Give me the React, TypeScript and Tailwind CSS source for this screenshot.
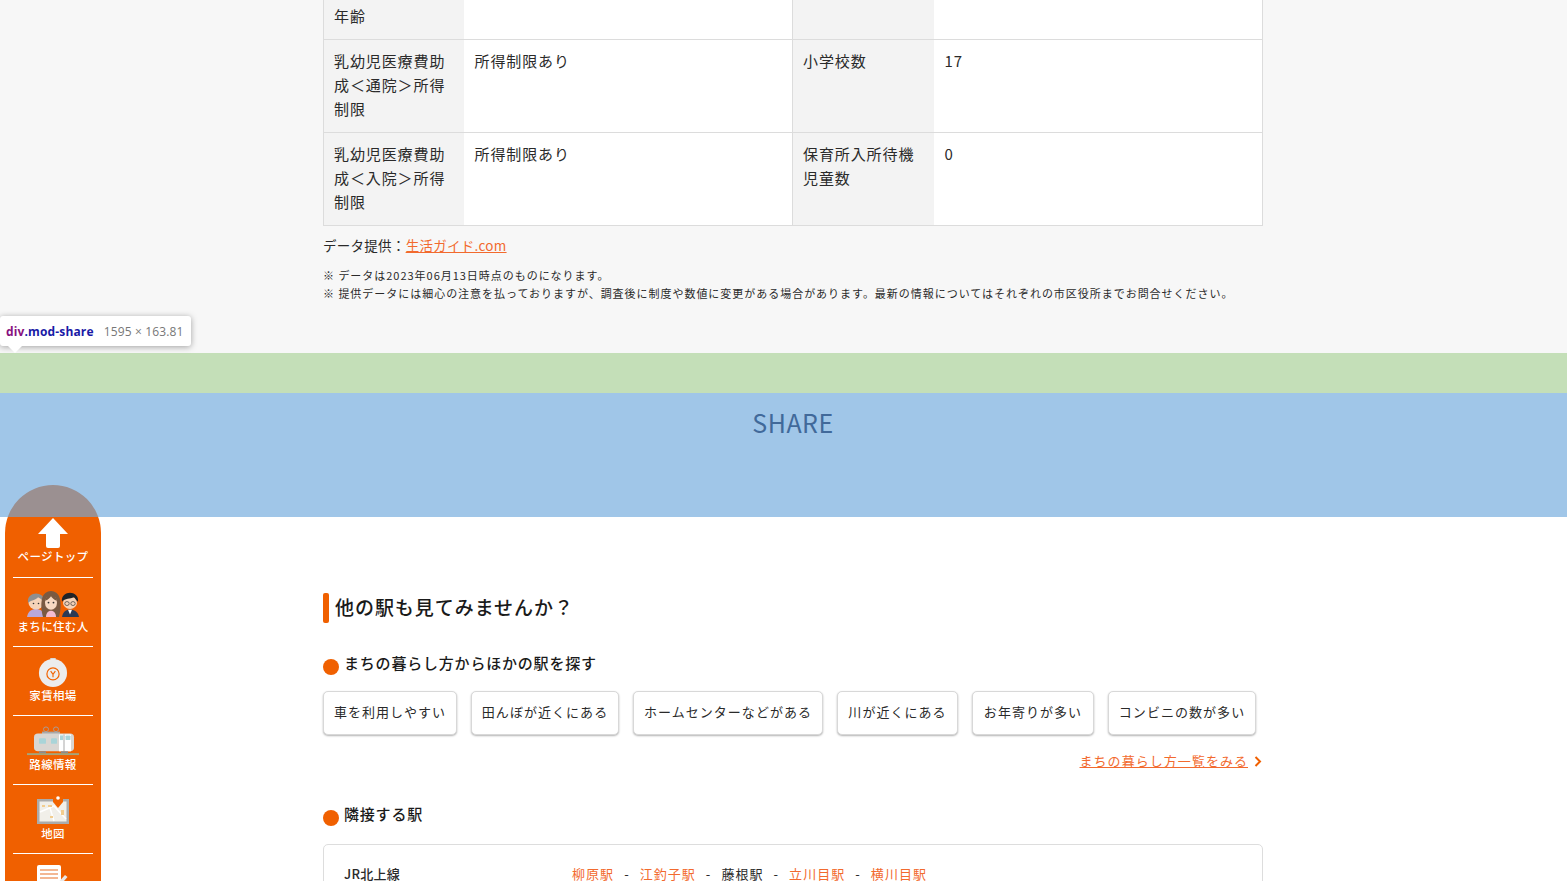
const font = { fontFamily: '"Noto Sans CJK JP", "Noto Sans", sans-serif' };

const themes = [
  { label: "車を利用しやすい", w: "w-[134px]" },
  { label: "田んぼが近くにある", w: "w-[148px]" },
  { label: "ホームセンターなどがある", w: "w-[190px]" },
  { label: "川が近くにある", w: "w-[121px]" },
  { label: "お年寄りが多い", w: "w-[122px]" },
  { label: "コンビニの数が多い", w: "w-[148px]" },
];

function PeopleIcon() {
  return (
    <svg width="54" height="28" viewBox="0 0 54 31" preserveAspectRatio="none">
      <path d="M1 30c1-7 5-9 9-9s8 2 9 9z" fill="#b9a8d8" />
      <circle cx="10" cy="14" r="7.5" fill="#f6d3b8" />
      <path d="M2 14c-1-7 4-10 8-10s9 3 8 9c-3-3-4-4-6-5-2 3-6 3-10 6z" fill="#8f8f8f" />
      <path d="M36 30c1-6 4-8 8-8s8 2 9 8z" fill="#2b3a55" />
      <path d="M42 22h4l-2 5z" fill="#fff" />
      <circle cx="44" cy="14" r="7" fill="#f6d3b8" />
      <path d="M36 13c-1-7 4-10 8-10s9 3 8 10c-2-2-3-4-4-5-4 2-9 1-12 5z" fill="#1f2328" />
      <circle cx="41" cy="15" r="2.2" fill="none" stroke="#333" strokeWidth=".7" />
      <circle cx="47" cy="15" r="2.2" fill="none" stroke="#333" strokeWidth=".7" />
      <path d="M17 30c-2-9-2-15-1-20 1-6 5-9 9-9s8 3 9 9c1 5 1 11-1 20z" fill="#7a5a42" />
      <path d="M20 30c0-4 2-7 5-7s5 3 5 7z" fill="#f3bcd0" />
      <ellipse cx="25" cy="14" rx="6" ry="8" fill="#f8d9c2" />
      <path d="M19 12c1-5 4-8 6-8s5 3 6 8c-3-1-5-3-6-5-1 2-3 4-6 5z" fill="#7a5a42" />
      <circle cx="22.5" cy="14" r=".9" fill="#333" />
      <circle cx="27.5" cy="14" r=".9" fill="#333" />
      <circle cx="7.500" cy="15" r=".8" fill="#333" />
      <circle cx="12.500" cy="15" r=".8" fill="#333" />
    </svg>
  );
}

function PouchIcon() {
  return (
    <svg width="32" height="30" viewBox="0 0 32 32">
      <path d="M13 1h6l-1 5h-4z" fill="#d8d8d8" />
      <circle cx="16" cy="17" r="15" fill="#ececec" />
      <circle cx="16" cy="18" r="6.500" fill="none" stroke="#f26300" strokeWidth="1.300" />
      <path d="M13.500 15l2.500 3.500 2.500-3.500M16 18.500v3" fill="none" stroke="#f26300" strokeWidth="1.200" />
    </svg>
  );
}

function TrainIcon() {
  return (
    <svg width="54" height="30" viewBox="0 0 54 32" preserveAspectRatio="none">
      <circle cx="20" cy="3.500" r="2.500" fill="none" stroke="#a89c96" />
      <circle cx="30" cy="3.500" r="2.500" fill="none" stroke="#a89c96" />
      <rect x="16" y="6" width="18" height="3" fill="#a8a8a8" />
      <rect x="8" y="8" width="40" height="19" rx="4" fill="#d9d6d2" />
      <rect x="13" y="13" width="7" height="6" rx="1" fill="#a9d4d8" />
      <rect x="25" y="13" width="6" height="6" rx="1" fill="#a9d4d8" />
      <rect x="33" y="9" width="12" height="18" fill="#fff" />
      <rect x="37.500" y="9" width="1" height="18" fill="#aaa" />
      <rect x="39.500" y="10" width="5" height="5" rx="1" fill="#a9d4d8" />
      <rect x="34" y="10" width="3" height="5" fill="#a9d4d8" />
      <rect x="13" y="27" width="7" height="2" fill="#8c8c8c" />
      <rect x="35" y="27" width="7" height="2" fill="#8c8c8c" />
      <rect x="1" y="29" width="52" height="2" fill="#a3a57c" />
    </svg>
  );
}

function MapIcon() {
  return (
    <svg width="34" height="30" viewBox="0 0 34 30">
      <rect x="1" y="4" width="32" height="25" fill="#ababab" />
      <rect x="3.500" y="6.500" width="27" height="20" fill="#f1efe9" />
      <path d="M4 17l14-6 12 13M14 13l4 13" fill="none" stroke="#fff" strokeWidth="1.500" />
      <rect x="6" y="10" width="3" height="2" fill="#f2cd8f" />
      <rect x="12" y="10" width="4" height="2" fill="#f2cd8f" />
      <rect x="14" y="21" width="3" height="2" fill="#f2cd8f" />
      <rect x="25" y="15" width="3" height="5" fill="#f2cd8f" />
      <path d="M22 13l-5-6V1h10v6z" fill="#f26300" />
      <circle cx="22" cy="3" r="1.800" fill="#fff" />
    </svg>
  );
}

function MemoIcon() {
  return (
    <svg width="34" height="30" viewBox="0 0 34 30">
      <rect x="1" y="1" width="24" height="29" rx="2" fill="#fff" />
      <path d="M4 6h18M4 10h18M4 14h18M4 18h12" stroke="#f0a070" strokeWidth="1.500" />
      <path d="M19 22l10-11 2.500 2L21 25l-3 1z" fill="#e8e8e8" />
    </svg>
  );
}

function NavItem({ icon, label, last }: { icon: React.ReactNode; label?: string; last?: boolean }) {
  return (
    <div className={last ? "mx-2 h-[69px] flex flex-col items-center" : "mx-2 h-[69px] flex flex-col items-center border-b border-white"}>
      <div className="h-[30px] mt-[10px] flex items-end justify-center">{icon}</div>
      {label && <div className="text-[11.500px] leading-[16px] text-white font-medium tracking-[.03em] whitespace-nowrap">{label}</div>}
    </div>
  );
}

function Sidebar() {
  return (
    <div className="absolute left-[5px] top-[485px] z-10 w-[96px] h-[420px] bg-[#f06000] rounded-t-[48px]">
      <div className="mx-2 h-[93px] border-b border-white flex flex-col items-center justify-end pb-[13px]">
        <svg width="32" height="32" viewBox="0 0 32 32">
          <path d="M16 1L31 17H23V29a2 2 0 0 1-2 2H11a2 2 0 0 1-2-2V17H1z" fill="#fff" />
        </svg>
        <div className="text-[11.500px] leading-[16px] text-white font-medium mt-[-1px] tracking-[.03em] whitespace-nowrap">ページトップ</div>
      </div>
      <NavItem icon={<PeopleIcon />} label="まちに住む人" />
      <NavItem icon={<PouchIcon />} label="家賃相場" />
      <NavItem icon={<TrainIcon />} label="路線情報" />
      <NavItem icon={<MapIcon />} label="地図" />
      <NavItem icon={<MemoIcon />} last />
    </div>
  );
}

function Row({ a, b, c, d, tall }: { a: string; b: string; c: string; d: string; tall?: boolean }) {
  const th = "bg-[#f3f3f3] font-normal text-left align-top border-y border-l border-[#dcdcdc] px-[10px] pt-[9px] pb-[11px] break-all";
  const td = "bg-white align-top border-y border-[#dcdcdc] px-[11px] pt-[9px] pb-[11px]";
  return (
    <tr className={tall ? "h-[93px]" : ""}>
      <th className={th}>{a}</th>
      <td className={td}>{b}</td>
      <th className={th}>{c}</th>
      <td className={td + " border-r"}>{d}</td>
    </tr>
  );
}

export default function App() {
  return (
    <div className="relative h-[881px] w-full overflow-hidden bg-white text-[#2a2a2a] tracking-[.05em]" style={font}>
      <Sidebar />

      <div className="bg-[#f7f7f7] h-[353px] flow-root">
        <div className="ml-[323px] w-[940px]">
          <table className="w-[939px] table-fixed border-collapse text-[15px] leading-[24px] tracking-[.06em] mt-[-6px]">
            <colgroup>
              <col className="w-[140px]" />
              <col className="w-[329px]" />
              <col className="w-[141px]" />
              <col className="w-[329px]" />
            </colgroup>
            <tbody>
              <Row a="年齢" b="" c="" d="" />
              <Row a="乳幼児医療費助成＜通院＞所得制限" b="所得制限あり" c="小学校数" d="17" tall />
              <Row a="乳幼児医療費助成＜入院＞所得制限" b="所得制限あり" c="保育所入所待機児童数" d="0" tall />
            </tbody>
          </table>
          <p className="text-[13.500px] leading-[20px] mt-[9px] tracking-[.02em]">
            データ提供：<span className="text-[#f26a2e] underline">生活ガイド.com</span>
          </p>
          <div className="text-[11px] leading-[18px] mt-[11px] tracking-[.97px] whitespace-nowrap">
            <p>※ データは2023年06月13日時点のものになります。</p>
            <p>※ 提供データには細心の注意を払っておりますが、調査後に制度や数値に変更がある場合があります。最新の情報についてはそれぞれの市区役所までお問合せください。</p>
          </div>
        </div>
      </div>

      {/* devtools highlight */}
      <div className="absolute left-0 top-[316px] z-30 h-[30px] w-[191px] bg-white rounded-[3px] shadow-[0_1px_6px_rgba(0,0,0,.35)] flex items-center pl-[6px] pt-[1px] text-[12px] tracking-[.012em] whitespace-nowrap" style={{ fontFamily: '"Open Sans", sans-serif' }}>
        <span className="font-bold text-[#881280]">div</span>
        <span className="font-bold text-[#1a1aa6]">.mod-share</span>
        <span className="ml-[10px] text-[#777]">1595 × 163.81</span>
        <div className="absolute left-[8px] top-[30px] w-0 h-0 border-x-[7px] border-x-transparent border-t-[7px] border-t-white" />
      </div>

      <div className="relative z-20 h-[40px] bg-[rgba(147,196,125,.55)]" />
      <div className="relative z-20 h-[124px] bg-[rgba(111,168,220,.66)] pt-[10px]">
        <div className="ml-[323px] w-[940px] text-center text-[25px] leading-[38px] tracking-[.02em] text-[#41699a]">
          SHARE
        </div>
      </div>

      <div className="ml-[323px] w-[940px]">
        <div className="mt-[76px] flex items-center h-[30px]">
          <div className="w-[6px] h-[30px] bg-[#f06000] rounded-[2px] mr-[6px]" />
          <h2 className="text-[19px] font-medium leading-[28px] tracking-[.05em] mb-[2px] text-[#1a1a1a]">他の駅も見てみませんか？</h2>
        </div>

        <div className="mt-[30px] flex h-[22px] items-center">
          <div className="w-[16px] h-[16px] rounded-full bg-[#f06000] mt-[5px] mr-[5px]" />
          <h3 className="text-[15px] font-medium leading-[22px] mb-[2px] text-[#1a1a1a]">まちの暮らし方からほかの駅を探す</h3>
        </div>

        <div className="mt-[16px] flex gap-[14px]">
          {themes.map((t) => (
            <div key={t.label} className={t.w + " h-[44px] pb-[2px] flex items-center justify-center bg-white border border-[#d8d8d8] rounded-[5px] shadow-[0_1px_2px_rgba(0,0,0,.3)] text-[13px] tracking-[.08em] whitespace-nowrap"}>
              {t.label}
            </div>
          ))}
        </div>

        <div className="mt-[16px] mr-[1px] h-[20px] flex items-center justify-end text-[13px] tracking-[.08em] text-[#f26a2e]">
          <span className="underline">まちの暮らし方一覧をみる</span>
          <svg className="ml-[6px]" width="8" height="11" viewBox="0 0 8 11">
            <path d="M1.500 1l4.500 4.500L1.500 10" fill="none" stroke="#f06000" strokeWidth="2" />
          </svg>
        </div>

        <div className="mt-[33px] flex h-[22px] items-center">
          <div className="w-[16px] h-[16px] rounded-full bg-[#f06000] mt-[5px] mr-[5px]" />
          <h3 className="text-[15px] font-medium leading-[22px] mb-[2px] text-[#1a1a1a]">隣接する駅</h3>
        </div>

        <div className="mt-[18px] h-[80px] border border-[#ddd] rounded-[5px] px-[20px] pt-[19px]">
          <div className="flex text-[13px] leading-[20px] tracking-[.08em]">
            <div className="w-[228px] font-medium tracking-[.02em]">JR北上線</div>
            <div className="flex gap-[10px]">
              <span className="text-[#f26a2e]">柳原駅</span>
              <span>-</span>
              <span className="text-[#f26a2e]">江釣子駅</span>
              <span>-</span>
              <span>藤根駅</span>
              <span>-</span>
              <span className="text-[#f26a2e]">立川目駅</span>
              <span>-</span>
              <span className="text-[#f26a2e]">横川目駅</span>
            </div>
          </div>
        </div>
      </div>
    </div>
  );
}
